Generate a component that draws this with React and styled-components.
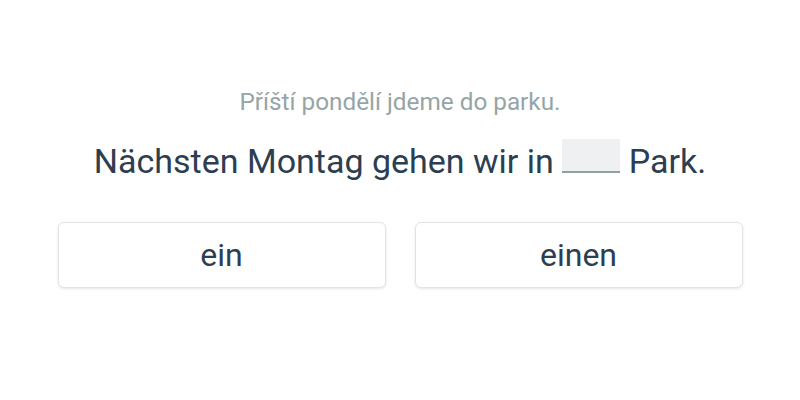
import React from "react";
import styled, { createGlobalStyle } from "styled-components";

const Global = createGlobalStyle`
  html, body { margin: 0; padding: 0; background: #ffffff; }
  body { font-family: Roboto, "Noto Sans", sans-serif; }
`;

const Page = styled.div`
  width: 800px;
  height: 400px;
  display: flex;
  flex-direction: column;
  align-items: center;
  padding-top: 86px;
  box-sizing: border-box;
`;

const Hint = styled.div`
  font-size: 24.3px;
  line-height: 32px;
  color: #95a5a6;
`;

const Sentence = styled.div`
  margin-top: 21px;
  font-size: 34px;
  line-height: 40px;
  color: #2c3e50;
`;

const Blank = styled.span`
  display: inline-block;
  width: 58px;
  height: 32px;
  background: #eef0f2;
  border-bottom: 2px solid #8fa0a1;
  vertical-align: baseline;
`;

const Options = styled.div`
  margin-top: 41px;
  display: grid;
  grid-template-columns: 328px 328px;
  column-gap: 29px;
`;

const Option = styled.button`
  height: 66px;
  background: #ffffff;
  border: 1px solid #e1e3e5;
  border-radius: 6px;
  box-shadow: 0 1px 3px rgba(0, 0, 0, 0.1);
  font-family: Roboto, "Noto Sans", sans-serif;
  font-size: 32px;
  color: #2c3e50;
  cursor: pointer;
  padding: 0;
`;

export default function App() {
  return (
    <>
      <Global />
      <Page>
        <Hint>Příští pondělí jdeme do parku.</Hint>
        <Sentence>
          Nächsten Montag gehen wir in <Blank /> Park.
        </Sentence>
        <Options>
          <Option>ein</Option>
          <Option>einen</Option>
        </Options>
      </Page>
    </>
  );
}
